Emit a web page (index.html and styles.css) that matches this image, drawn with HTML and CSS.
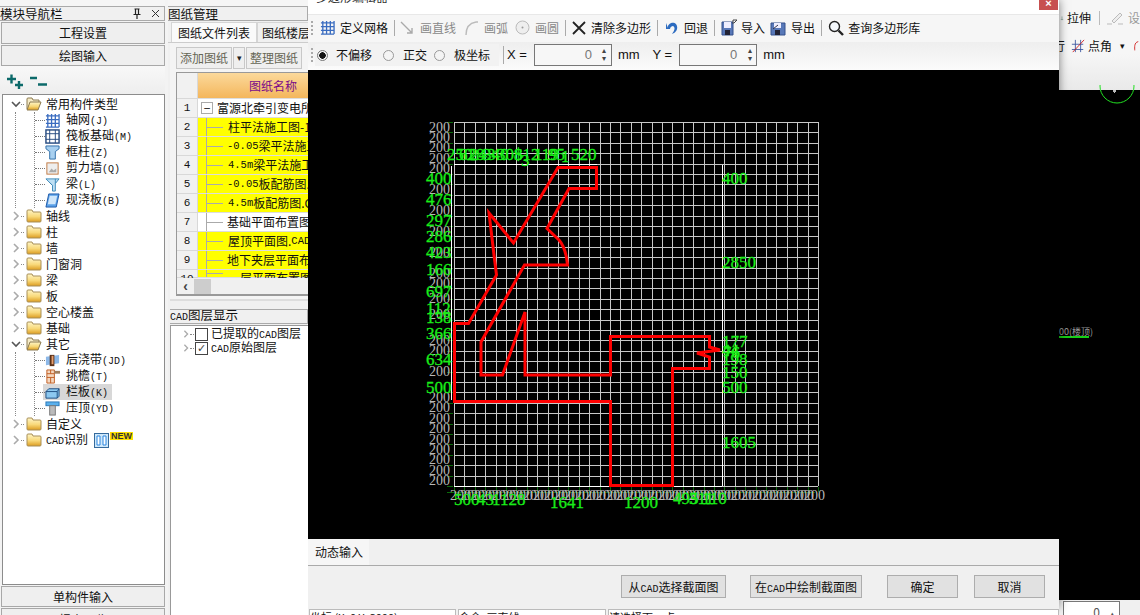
FILE: index.html
```html
<!DOCTYPE html>
<html lang="zh">
<head>
<meta charset="utf-8">
<title>多边形编辑器</title>
<link rel="stylesheet" href="styles.css">
</head>
<body>
<svg class="defs" width="0" height="0" aria-hidden="true">
  <defs>
    <linearGradient id="fg" x1="0" y1="0" x2="0" y2="1"><stop offset="0" stop-color="#fff6c8"/><stop offset=".55" stop-color="#f8d878"/><stop offset="1" stop-color="#dc9c20"/></linearGradient>
    <symbol id="folder" viewBox="0 0 16 14"><path d="M1 3V2q0-1 1-1h4l1 2h7q1 0 1 1v8q0 1-1 1H2q-1 0-1-1z" fill="url(#fg)" stroke="#a88f58"/></symbol>
    <symbol id="folder-open" viewBox="0 0 16 14"><path d="M1 12V2q0-1 1-1h4l1 2h6v2" fill="#f6ecc8" stroke="#8c7a50"/><path d="M1 13l3-8h11l-3 8z" fill="url(#fg)" stroke="#8c7a50"/></symbol>
    <symbol id="i-grid" viewBox="0 0 16 16"><path d="M1 3h14M1 7h14M1 11h14M1 15h14M3 1v14M7 1v14M11 1v14M15 1v14" stroke="#3a6cc0" stroke-width="1.4" fill="none"/></symbol>
  </defs>
</svg>
<div class="app">
  <aside class="nav">
    <div class="topgap"></div>
    <div class="head"><span class="head-t">模块导航栏</span><span class="head-i">
      <svg width="10" height="11" viewBox="0 0 10 11"><path d="M2.5 1h5M3.5 1v5M6.5 1v5M1.5 6.5h7M5 7v4" stroke="#222" stroke-width="1.2" fill="none"/></svg>
      <svg width="9" height="9" viewBox="0 0 9 9"><path d="M1 1l7 7M8 1L1 8" stroke="#333" fill="none"/></svg></span></div>
    <div class="navbtn tall">工程设置</div>
    <div class="navbtn">绘图输入</div>
    <div class="navtools">
      <svg width="44" height="20" viewBox="0 0 44 20"><path d="M1 8h9M5.500 3.500v9M9 14h8M13 10v8M24 7h7M32 13.500h9" stroke="#0c6a6a" stroke-width="2.400" fill="none"/></svg>
    </div>
    <div class="tree">
      <div class="row"><svg class="tw" viewBox="0 0 10 10"><path d="M1 3l4 4 4-4" stroke="#555" stroke-width="1.600" fill="none"/></svg><i class="dots"></i><svg class="fd"><use href="#folder-open"/></svg><span>常用构件类型</span></div>
      <div class="kids"><div class="kids-in">
        <div class="row kid"><svg class="ki" viewBox="0 0 16 16"><use href="#i-grid"/></svg><span>轴网<b>(J)</b></span></div>
        <div class="row kid"><svg class="ki" viewBox="0 0 16 16"><rect x="1" y="1" width="14" height="14" fill="none" stroke="#254a80" stroke-width="1.500"/><path d="M1 5h14M1 11h14M5 1v14M11 1v14" stroke="#254a80"/></svg><span>筏板基础<b>(M)</b></span></div>
        <div class="row kid"><svg class="ki" viewBox="0 0 16 16"><path d="M1 1h14v3l-4 3v8H5V7L1 4z" fill="#a8d0f0" stroke="#2c6ca8"/></svg><span>框柱<b>(Z)</b></span></div>
        <div class="row kid"><svg class="ki" viewBox="0 0 16 16"><rect x="2" y="2" width="12" height="12" fill="#eee" stroke="#c07840"/><path d="M4 12l3-4 2 2 3-2v4z" fill="#aaa"/></svg><span>剪力墙<b>(Q)</b></span></div>
        <div class="row kid"><svg class="ki" viewBox="0 0 16 16"><path d="M1 2h14l-4 5v8H8V9z" fill="#bfe0f4" stroke="#3a88b8"/><path d="M5 6l3 3M11 2v5" stroke="#3a88b8"/></svg><span>梁<b>(L)</b></span></div>
        <div class="row kid"><svg class="ki" viewBox="0 0 16 16"><path d="M4 1h11l-3 14H1z" fill="#5aa0e8" stroke="#1c58a8"/><path d="M5 3h8l-2 9H3z" fill="#cfe6fa"/></svg><span>现浇板<b>(B)</b></span></div>
      </div></div>
      <div class="row"><svg class="tw" viewBox="0 0 10 10"><path d="M3 1l4 4-4 4" stroke="#aaa" stroke-width="1.600" fill="none"/></svg><i class="dots"></i><svg class="fd"><use href="#folder"/></svg><span>轴线</span></div>
      <div class="row"><svg class="tw" viewBox="0 0 10 10"><path d="M3 1l4 4-4 4" stroke="#aaa" stroke-width="1.600" fill="none"/></svg><i class="dots"></i><svg class="fd"><use href="#folder"/></svg><span>柱</span></div>
      <div class="row"><svg class="tw" viewBox="0 0 10 10"><path d="M3 1l4 4-4 4" stroke="#aaa" stroke-width="1.600" fill="none"/></svg><i class="dots"></i><svg class="fd"><use href="#folder"/></svg><span>墙</span></div>
      <div class="row"><svg class="tw" viewBox="0 0 10 10"><path d="M3 1l4 4-4 4" stroke="#aaa" stroke-width="1.600" fill="none"/></svg><i class="dots"></i><svg class="fd"><use href="#folder"/></svg><span>门窗洞</span></div>
      <div class="row"><svg class="tw" viewBox="0 0 10 10"><path d="M3 1l4 4-4 4" stroke="#aaa" stroke-width="1.600" fill="none"/></svg><i class="dots"></i><svg class="fd"><use href="#folder"/></svg><span>梁</span></div>
      <div class="row"><svg class="tw" viewBox="0 0 10 10"><path d="M3 1l4 4-4 4" stroke="#aaa" stroke-width="1.600" fill="none"/></svg><i class="dots"></i><svg class="fd"><use href="#folder"/></svg><span>板</span></div>
      <div class="row"><svg class="tw" viewBox="0 0 10 10"><path d="M3 1l4 4-4 4" stroke="#aaa" stroke-width="1.600" fill="none"/></svg><i class="dots"></i><svg class="fd"><use href="#folder"/></svg><span>空心楼盖</span></div>
      <div class="row"><svg class="tw" viewBox="0 0 10 10"><path d="M3 1l4 4-4 4" stroke="#aaa" stroke-width="1.600" fill="none"/></svg><i class="dots"></i><svg class="fd"><use href="#folder"/></svg><span>基础</span></div>
      <div class="row"><svg class="tw" viewBox="0 0 10 10"><path d="M1 3l4 4 4-4" stroke="#555" stroke-width="1.600" fill="none"/></svg><i class="dots"></i><svg class="fd"><use href="#folder-open"/></svg><span>其它</span></div>
      <div class="kids short"><div class="kids-in">
        <div class="row kid"><svg class="ki" viewBox="0 0 16 16"><path d="M1 4l14-2v9L1 13z" fill="#8cb8e8"/><rect x="5" y="2" width="5" height="12" fill="#5a3018"/><rect x="7" y="3" width="2" height="9" fill="#e8a070"/></svg><span>后浇带<b>(JD)</b></span></div>
        <div class="row kid"><svg class="ki" viewBox="0 0 16 16"><path d="M2 1h8v14H2zM2 5h8M2 9h8M6 1v4M6 9v6" fill="#f4d8c0" stroke="#c05c20"/><path d="M10 2h6v3h-6z" fill="#a08060"/></svg><span>挑檐<b>(T)</b></span></div>
        <div class="row kid sel"><svg class="ki" viewBox="0 0 16 16"><path d="M1 7l3-3h11v8l-2 2H1z" fill="#8cc8f0" stroke="#1c4c80"/><path d="M1 7h12v7M13 7l2-3" fill="none" stroke="#1c4c80"/></svg><span>栏板<b>(K)</b></span></div>
        <div class="row kid"><svg class="ki" viewBox="0 0 16 16"><rect x="1" y="1" width="14" height="4" fill="#5ab0ec" stroke="#2a78b8"/><rect x="5" y="5" width="6" height="10" fill="#bbb" stroke="#777"/></svg><span>压顶<b>(YD)</b></span></div>
      </div></div>
      <div class="row"><svg class="tw" viewBox="0 0 10 10"><path d="M3 1l4 4-4 4" stroke="#aaa" stroke-width="1.600" fill="none"/></svg><i class="dots"></i><svg class="fd"><use href="#folder"/></svg><span>自定义</span></div>
      <div class="row"><svg class="tw" viewBox="0 0 10 10"><path d="M3 1l4 4-4 4" stroke="#aaa" stroke-width="1.600" fill="none"/></svg><i class="dots"></i><svg class="fd"><use href="#folder"/></svg><span><b>CAD</b>识别</span>
        <svg class="cadi" viewBox="0 0 15 15"><rect x=".5" y=".5" width="14" height="14" fill="#cfe8fa" stroke="#356a9c"/><path d="M3 3h3v9H3zM9 3h3v9H9z" fill="#fff" stroke="#2a86e0"/></svg><em class="new">NEW</em></div>
    </div>
    <div class="navbtn low">单构件输入</div>
    <div class="navbtn low cut">报表预览</div>
  </aside>

  <section class="docs">
    <div class="topgap"></div>
    <div class="head"><span class="head-t">图纸管理</span></div>
    <div class="tabs"><span class="tab on">图纸文件列表</span><span class="tab">图纸楼层构件</span></div>
    <div class="page">
      <div class="dtools"><span class="dbtn w1">添加图纸</span><span class="dbtn caret">▾</span><span class="dbtn w1">整理图纸</span></div>
      <div class="sheet">
        <div class="g-row hd"><span class="num"></span><span class="name">图纸名称</span></div>
        <div class="g-row first"><span class="num">1</span><span class="name"><i class="minus">−</i>富源北牵引变电所</span></div>
        <div class="g-row y"><span class="num">2</span><span class="name"><i class="ln"></i>柱平法施工图-1.CAD</span></div>
        <div class="g-row y"><span class="num">3</span><span class="name"><i class="ln s"></i><b>-0.05</b>梁平法施工图</span></div>
        <div class="g-row y"><span class="num">4</span><span class="name"><i class="ln"></i><b>4.5m</b>梁平法施工图</span></div>
        <div class="g-row y"><span class="num">5</span><span class="name"><i class="ln s"></i><b>-0.05</b>板配筋图.CAD</span></div>
        <div class="g-row y"><span class="num">6</span><span class="name"><i class="ln"></i><b>4.5m</b>板配筋图.CAD</span></div>
        <div class="g-row"><span class="num">7</span><span class="name"><i class="ln s"></i>基础平面布置图</span></div>
        <div class="g-row y"><span class="num">8</span><span class="name"><i class="ln"></i>屋顶平面图.<b>CAD</b></span></div>
        <div class="g-row y"><span class="num">9</span><span class="name"><i class="ln s"></i>地下夹层平面布</span></div>
        <div class="g-row y last"><span class="num">10</span><span class="name"><i class="ln l"></i>层平面布置图</span></div>
        <div class="hscroll"><span class="arr">‹</span><span class="thumb"></span></div>
      </div>
    </div>
    <div class="head layer"><span class="head-t"><b>CAD</b>图层显示</span></div>
    <div class="layers">
      <div class="lrow"><svg class="tw2" viewBox="0 0 10 10"><path d="M3 1l4 4-4 4" stroke="#aaa" stroke-width="1.600" fill="none"/></svg><i class="dots2"></i><i class="cb"></i><span>已提取的<b>CAD</b>图层</span></div>
      <div class="lrow"><svg class="tw2" viewBox="0 0 10 10"><path d="M3 1l4 4-4 4" stroke="#aaa" stroke-width="1.600" fill="none"/></svg><i class="dots2"></i><i class="cb">✓</i><span><b>CAD</b>原始图层</span></div>
    </div>
  </section>

  <main class="stage">
    <div class="ribbon">
      <div class="rb r1"><svg width="10" height="14" viewBox="0 0 10 14"><path d="M5 3v8M2 11h6" stroke="#365" fill="none"/></svg><span>拉伸</span><i class="rsep"></i><svg class="pen" width="18" height="15" viewBox="0 0 18 15"><path d="M5 10l8-8 2 2-8 8z" fill="#eee" stroke="#bbb"/><path d="M0 13h5M11 13h5" stroke="#bbb"/></svg><span class="dim">设</span></div>
      <div class="rb r2"><span>行</span><svg width="16" height="16" viewBox="0 0 16 16"><path d="M1 6h13M1 12h13M5 1v14M11 1v14" stroke="#3a55a0" fill="none"/><path d="M2 15L15 1" stroke="#d01818"/></svg><span>点角</span><span class="cr">▾</span><svg width="8" height="12" viewBox="0 0 8 12"><path d="M6 1C1 2 2 8 2 11" stroke="#d01818" fill="none"/></svg></div>
    </div>
    <div class="viewport">
      <svg class="ring" width="36" height="20" viewBox="0 0 36 20"><circle cx="18" cy="1" r="17" fill="none" stroke="#22e022"/><path d="M14 5h3v2h-1v1h-1V7h-1z" fill="#bbb"/></svg>
      <span class="floor">00(楼顶)</span>
    </div>
    <div class="statusbar"><span class="spin">0<i>▴</i></span></div>

    <div class="dialog">
      <div class="dtitle"><span>多边形编辑器</span></div>
      <span class="close">×</span>
      <div class="tb one">
        <i class="grip"></i>
        <svg class="ic g1" width="15" height="15" viewBox="0 0 16 16"><use href="#i-grid"/></svg><span class="t t1">定义网格</span><i class="sep s1"></i>
        <svg class="ic g2" width="16" height="16" viewBox="0 0 16 16"><path d="M2 2l11 11M13 8v5H8" stroke="#aaa" stroke-width="1.400" fill="none"/></svg><span class="t off t2">画直线</span>
        <svg class="ic g3" width="15" height="16" viewBox="0 0 15 16"><path d="M2 15C2 7 6 3 12 2" stroke="#bbb" stroke-width="1.400" fill="none"/><circle cx="13" cy="2" r="1" fill="#bbb"/></svg><span class="t off t3">画弧</span>
        <svg class="ic g3" width="15" height="15" viewBox="0 0 15 15"><circle cx="7.500" cy="7.500" r="6.500" fill="#eee" stroke="#bbb"/><circle cx="7.500" cy="7.500" r="1" fill="#999"/></svg><span class="t off t4">画圆</span><i class="sep s2"></i>
        <svg class="ic gx" width="14" height="14" viewBox="0 0 14 14"><path d="M1 1l12 12M13 1L1 13" stroke="#222" stroke-width="1.800" fill="none"/></svg><span class="t t5">清除多边形</span><i class="sep s3"></i>
        <svg class="ic g4" width="13" height="14" viewBox="0 0 13 14"><path d="M3 7C2 3 8 0 11 3c3 4 0 9-4 10C9 10 11 7 8 5 7 5 5 6 5 8L1 8 1 2z" fill="#2d6cc0"/></svg><span class="t t6">回退</span><i class="sep s4"></i>
        <svg class="ic g5" width="17" height="17" viewBox="0 0 17 17"><path d="M1 3h11v13H1z" fill="#5878b8" stroke="#34508c"/><rect x="3" y="3" width="7" height="6" fill="#eef"/><rect x="4" y="11" width="5" height="5" fill="#223"/><path d="M12 5V1h4M13 4l3-3" stroke="#444" fill="none"/></svg><span class="t t7">导入</span>
        <svg class="ic g6" width="17" height="16" viewBox="0 0 17 16"><path d="M1 3h14v12H1z" fill="#5878b8" stroke="#34508c"/><rect x="4" y="3" width="7" height="5" fill="#eef"/><rect x="5" y="10" width="5" height="5" fill="#223"/><path d="M8 5l-5 4" stroke="#334" fill="none"/></svg><span class="t t8">导出</span><i class="sep s5"></i>
        <svg class="ic g5" width="16" height="16" viewBox="0 0 16 16"><circle cx="6.500" cy="6.500" r="5" fill="#f4f8fc" stroke="#222" stroke-width="1.400"/><path d="M10.500 10.500l4.500 4.500" stroke="#222" stroke-width="2.400"/></svg><span class="t t9">查询多边形库</span>
      </div>
      <div class="tb two">
        <i class="grip"></i>
        <div class="radios">
          <i class="radio on"></i><span class="rl r-a">不偏移</span>
          <i class="radio"></i><span class="rl r-b">正交</span>
          <i class="radio"></i><span class="rl">极坐标</span>
        </div>
        <i class="sep s6"></i>
        <span class="lab">X =</span>
        <span class="num-in">0<i class="sp">▴<br>▾</i></span>
        <span class="lab mm">mm</span>
        <span class="lab y">Y =</span>
        <span class="num-in">0<i class="sp">▴<br>▾</i></span>
        <span class="lab mm">mm</span>
      </div>
      <svg class="cad" width="751" height="469" viewBox="308 70 751 469" role="img" aria-label="多边形网格">
        <path class="grid" d="M454 122V486M464 122V486M475 122V486M485 122V486M496 122V486M506 122V486M516 122V486M527 122V486M537 122V486M548 122V486M558 122V486M568 122V486M579 122V486M589 122V486M600 122V486M610 122V486M620 122V486M631 122V486M641 122V486M652 122V486M662 122V486M672 122V486M683 122V486M693 122V486M704 122V486M714 122V486M724 122V486M735 122V486M745 122V486M756 122V486M766 122V486M776 122V486M787 122V486M797 122V486M808 122V486M818 122V486M454 122H818M454 132H818M454 143H818M454 153H818M454 164H818M454 174H818M454 184H818M454 195H818M454 205H818M454 216H818M454 226H818M454 236H818M454 247H818M454 257H818M454 268H818M454 278H818M454 288H818M454 299H818M454 309H818M454 320H818M454 330H818M454 340H818M454 351H818M454 361H818M454 372H818M454 382H818M454 392H818M454 403H818M454 413H818M454 424H818M454 434H818M454 444H818M454 455H818M454 465H818M454 476H818M454 486H818"/>
        <path class="ticks" d="M447 492H815M454 487V492M464 487V492M475 487V492M485 487V492M496 487V492M506 487V492M516 487V492M527 487V492M537 487V492M548 487V492M558 487V492M568 487V492M579 487V492M589 487V492M600 487V492M610 487V492M620 487V492M631 487V492M641 487V492M652 487V492M662 487V492M672 487V492M683 487V492M693 487V492M704 487V492M714 487V492M724 487V492M735 487V492M745 487V492M756 487V492M766 487V492M776 487V492M787 487V492M797 487V492M808 487V492M818 487V492M447 122H453M447 132H453M447 143H453M447 153H453M447 164H453M447 174H453M447 184H453M447 195H453M447 205H453M447 216H453M447 226H453M447 236H453M447 247H453M447 257H453M447 268H453M447 278H453M447 288H453M447 299H453M447 309H453M447 320H453M447 330H453M447 340H453M447 351H453M447 361H453M447 372H453M447 382H453M447 392H453M447 403H453M447 413H453M447 424H453M447 434H453M447 444H453M447 455H453M447 465H453M447 476H453M447 486H453"/>
        <path class="wh" d="M454 164.500H597M451.500 166V400M722.500 165V486M454 486.500H722"/>
        <g class="gy">
          <text x="429" y="132">200</text><text x="429" y="142">200</text><text x="429" y="152">200</text><text x="429" y="163">200</text><text x="429" y="173">200</text><text x="429" y="194">200</text><text x="429" y="215">200</text><text x="429" y="236">200</text><text x="429" y="257">200</text><text x="429" y="278">200</text><text x="429" y="288">200</text><text x="429" y="303">200</text><text x="429" y="319">200</text><text x="429" y="345">200</text><text x="429" y="355">200</text><text x="429" y="376">200</text><text x="429" y="402">200</text><text x="429" y="412">200</text><text x="429" y="423">200</text><text x="429" y="433">200</text><text x="429" y="444">200</text><text x="429" y="454">200</text><text x="429" y="464">200</text><text x="429" y="475">200</text><text x="429" y="485">200</text>
          <text x="450" y="500">200</text><text x="460" y="500">200</text><text x="471" y="500">200</text><text x="481" y="500">200</text><text x="492" y="500">200</text><text x="502" y="500">200</text><text x="512" y="500">200</text><text x="523" y="500">200</text><text x="533" y="500">200</text><text x="544" y="500">200</text><text x="554" y="500">200</text><text x="564" y="500">200</text><text x="575" y="500">200</text><text x="585" y="500">200</text><text x="596" y="500">200</text><text x="606" y="500">200</text><text x="616" y="500">200</text><text x="627" y="500">200</text><text x="637" y="500">200</text><text x="648" y="500">200</text><text x="658" y="500">200</text><text x="668" y="500">200</text><text x="679" y="500">200</text><text x="689" y="500">200</text><text x="700" y="500">200</text><text x="710" y="500">200</text><text x="720" y="500">200</text><text x="731" y="500">200</text><text x="741" y="500">200</text><text x="752" y="500">200</text><text x="762" y="500">200</text><text x="772" y="500">200</text><text x="783" y="500">200</text><text x="793" y="500">200</text><text x="804" y="500">200</text>
        </g>
        <path class="poly" d="M558 167.500H596.500V188.500H569L547 228.500 559 240Q566 248 567.500 265H524.500L481 342V375H502.500L525 312V375H610.500V336.500H709.500V347L720 350 697 353 709.500 357V368.500H672.500V485.500H610.500V401.500H454.500V323.500H468.500L496.500 275 494 255 489 213 513.500 243z"/>
        <g class="gr">
          <text x="447" y="160">250</text><text x="459" y="160">628</text><text x="470" y="160">243</text><text x="483" y="160">340</text><text x="497" y="160">308</text><text x="514" y="160">$12</text><text x="534" y="160">119</text><text x="548" y="160">95</text><text x="571" y="160">520</text><text x="521" y="166">3</text><text x="561" y="162">1</text>
          <text x="426" y="184">400</text><text x="426" y="205">476</text><text x="426" y="226">297</text><text x="426" y="242">286</text><text x="426" y="258">423</text><text x="426" y="275">166</text><text x="426" y="297">697</text><text x="426" y="314">112</text><text x="426" y="323">138</text><text x="426" y="339">366</text><text x="426" y="365">634</text><text x="426" y="393">500</text>
          <text x="722" y="184">400</text><text x="722" y="268">2850</text><text x="722" y="347">177</text><text x="722" y="356">44</text><text x="723" y="358">76</text><text x="722" y="365">198</text><text x="722" y="378">150</text><text x="722" y="393">500</text><text x="722" y="448">1605</text>
          <text x="454" y="505">500</text><text x="477" y="505">43</text><text x="492" y="505">1</text><text x="500" y="505">128</text><text x="550" y="508">1641</text><text x="624" y="508">1200</text><text x="673" y="504">495</text><text x="689" y="504">311</text><text x="702" y="504">110</text>
        </g>
      </svg>
      <div class="dtab"><span>动态输入</span></div>
      <div class="foot">
        <span class="fbtn a">从<b>CAD</b>选择截面图</span>
        <span class="fbtn b">在<b>CAD</b>中绘制截面图</span>
        <span class="fbtn c">确定</span>
        <span class="fbtn c">取消</span>
      </div>
    </div>
    <div class="under"><span class="ub u1">坐标 (X: 0 Y: 3000)</span><span class="ub u2">命令: 画直线</span><span class="ub u3">请选择下一点</span></div>
  </main>
</div>
</body>
</html>
```
FILE: styles.css
```css
* { box-sizing: border-box; }
html, body { margin: 0; height: 100%; }
body { width: 1140px; height: 615px; overflow: hidden; background: #f0f0f0; font: 12px/16px "Noto Sans CJK SC", "Liberation Sans", sans-serif; color: #111; }
.defs { position: absolute; }
i, em { font-style: normal; }
b { font: 10px/16px "Liberation Mono", monospace; }
.app { display: flex; width: 1140px; height: 615px; }
.topgap { height: 6px; background: #f5f5f5; flex: none; }

/* nav */
.nav { width: 168px; flex: none; background: #f3f3f3; padding-right: 3px; display: flex; flex-direction: column; }
.head { height: 15px; flex: none; display: flex; align-items: center; justify-content: space-between; border-top: 1px solid #aaa; border-bottom: 1px solid #aaa; border-right: 1px solid #aaa; background: #f0f0f0; font-size: 12.500px; line-height: 13px; white-space: nowrap; }
.head-i { display: flex; gap: 9px; align-items: center; padding-right: 4px; }
.navbtn { height: 21px; margin: 1px 0 0 1px; background: #efefef; border: 1px solid #a8a8a8; text-align: center; line-height: 19px; flex: none; }
.navbtn.tall { height: 22px; line-height: 20px; }
.navtools { height: 28px; flex: none; padding: 5px 0 0 6px; background: linear-gradient(#f8f8f8, #eee); }
.tree { flex: 1; margin-left: 2px; background: #fff; border: 1.500px solid #8c8c8c; padding-top: 1px; overflow: hidden; min-height: 0; }
.navbtn.low { margin-top: 1px; height: 21px; }
.navbtn.cut { height: 20px; line-height: 22px; margin-bottom: -13px; overflow: hidden; }
.row { height: 16px; display: flex; align-items: center; white-space: nowrap; padding-left: 8px; }
.tw { width: 10px; height: 10px; flex: none; }
.dots { width: 3px; margin: 0 2px 0 0; border-top: 1px dotted #888; flex: none; }
.fd { width: 16px; height: 14px; margin-right: 4px; flex: none; }
.kids { margin-left: 12px; border-left: 1px dotted #888; }
.kids-in { margin-left: 18px; border-left: 1px dotted #888; height: 96px; }
.kids.short .kids-in { height: 64px; }
.kid { padding-left: 0; }
.kid::before { content: ""; width: 10px; border-top: 1px dotted #777; flex: none; }
.ki { width: 15px; height: 15px; margin-right: 6px; flex: none; }
.sel { background: linear-gradient(#d8d8d8, #d8d8d8) 8px 0 / 69px 100% no-repeat; }
.cadi { width: 15px; height: 15px; margin-left: 6px; flex: none; }
.new { font: bold 9px/8px "Liberation Sans", sans-serif; background: #ffe000; color: #333; padding: 0 1px; align-self: flex-start; margin-left: 1px; }

/* docs */
.docs { width: 140px; flex: none; overflow: hidden; background: #f0f0f0; display: flex; flex-direction: column; }
.tabs { display: flex; height: 21px; margin-top: 1px; padding-left: 3px; border-bottom: 1px solid #ccc; flex: none; white-space: nowrap; }
.tab { flex: none; padding: 0 3px 0 4px; line-height: 19px; background: #f0f0f0; border: 1px solid #d5d5d5; border-bottom: 0; }
.tab.on { background: #fafafa; width: 86px; padding-left: 6px; }
.page { height: 258px; flex: none; margin-left: 2px; background: #f4f4f4; border-bottom: 2px solid #ddd; padding: 4px 0 0 6px; overflow: hidden; }
.dtools { display: flex; gap: 1px; height: 22px; }
.dbtn { flex: none; background: #efefef; border: 1px solid #c8c8c8; color: #665; line-height: 20px; text-align: center; }
.dbtn.w1 { width: 56px; }
.dbtn.caret { width: 12px; font-size: 9px; color: #222; }
.sheet { margin-top: 3px; border: 1.500px solid #999; border-right: 0; background: #fff; width: 200px; }
.g-row { display: flex; height: 19px; white-space: nowrap; }
.g-row .num { width: 21px; background: #f1f1f1; border: 1px solid #d8d8d8; border-width: 0 1px 1px 0; text-align: center; flex: none; font: 11px/18px "Liberation Mono", monospace; }
.name { flex: 1; display: flex; align-items: center; border-bottom: 1px solid #ddd; padding-left: 3px; }
.g-row.y .name { background: #ffff00; }
.g-row .name b { font-size: 10.500px; }
.g-row.hd { height: 26px; }
.hd .num { height: 26px; }
.hd .name { background: linear-gradient(#fbd99b, #f4b65c); color: #7a0a8a; justify-content: flex-start; padding-left: 51px; }
.minus { width: 12px; height: 12px; border: 1px solid #aaa; line-height: 9px; font-size: 12px; text-align: center; margin-right: 4px; background: #fff; }
.ln { width: 21px; height: 100%; margin-left: 5px; border-left: 1px solid #aaa; flex: none; margin-right: 1px; background: linear-gradient(#aaa, #aaa) 0 50%/16px 1px no-repeat; }
.ln.s { width: 20px; }
.ln.l { width: 33px; }
.g-row.last { height: 8px; overflow: hidden; }
.g-row.last .name { align-items: flex-start; }
.hscroll { height: 17px; background: #f0f0f0; display: flex; align-items: center; border-bottom: 1.500px solid #999; }
.arr { width: 17px; text-align: center; font: bold 14px/14px "Liberation Sans", sans-serif; color: #444; }
.thumb { width: 17px; height: 15px; background: #cdcdcd; }
.head.layer { margin-top: 8px; margin-left: 2px; }
.layers { flex: 1; margin: 1px 0 0 2px; background: #fff; border-left: 1.500px solid #999; border-top: 1.500px solid #999; padding: 1px 0 0 11px; }
.lrow { display: flex; align-items: center; height: 14px; white-space: nowrap; }
.tw2 { width: 8px; height: 10px; flex: none; }
.dots2 { width: 4px; border-top: 1px dotted #888; margin-right: 1px; flex: none; }
.cb { width: 13px; height: 13px; border: 1px solid #444; margin-right: 3px; font: 11px/11px "DejaVu Sans", sans-serif; text-align: center; flex: none; color: #444; }

/* stage */
.stage { position: relative; flex: 1; background: #000; display: flex; flex-direction: column; overflow: hidden; }
.ribbon { height: 90px; flex: none; margin-left: 751px; background: linear-gradient(#f6f6f6 60%, #e9e9e9); padding-top: 5px; }
.rb { display: flex; align-items: center; white-space: nowrap; height: 26px; overflow: hidden; }
.r1 { gap: 2px; }
.r1 svg:first-child { margin-left: 1px; }
.r1 span { margin-left: 1px; }
.r1 .rsep { margin: 0 5px 0 6px; }
.r2 { margin-top: 2px; gap: 3px; }
.r2 span:first-child { margin-left: -6px; }
.r2 svg:first-of-type { margin-left: 3px; }
.rsep { width: 1px; height: 14px; background: #bbb; flex: none; }
.pen { flex: none; }
.dim { color: #999; }
.cr { font-size: 9px; margin: 0 5px; }
.viewport { flex: 1; position: relative; }
.ring { position: absolute; left: 791px; top: -5px; }
.floor { position: absolute; left: 751px; top: 238px; font: 9px/8px "Noto Sans CJK SC", sans-serif; color: #999; border-bottom: 2px solid #16d016; width: 30px; white-space: nowrap; }
.statusbar { height: 15px; flex: none; background: #f0f0f0; padding-left: 755px; }
.spin { display: block; width: 57px; height: 15px; margin-top: 1px; background: #fff; border: 1px solid #777; border-bottom: 0; text-align: right; color: #555; padding-right: 4px; line-height: 20px; }
.spin i { font-size: 9px; margin-left: 10px; }

/* dialog */
.dialog { position: absolute; left: 0; top: 0; width: 751px; height: 607px; background: #f0f0f0; box-shadow: 0 0 9px rgba(0, 0, 0, .5); display: flex; flex-direction: column; }
.dtitle { height: 14px; flex: none; background: #fff; padding-left: 8px; overflow: hidden; color: #333; }
.dtitle span { display: block; margin-top: -11px; }
.close { position: absolute; left: 731px; top: 0; width: 19px; height: 10px; background: #c75050; color: #fff; font: bold 11px/7px "Liberation Sans", sans-serif; text-align: center; }
.tb { display: flex; align-items: center; flex: none; white-space: nowrap; padding-bottom: 2px; }
.tb.one { height: 28px; background: #f6f6f6; border-top: 1px solid #e8e8e8; }
.tb.two { height: 28px; background: linear-gradient(#eee, #fbfbfb); }
.grip { width: 2px; height: 14px; margin-left: 3px; flex: none; border-left: 2px dotted #aaa; }
.ic { flex: none; }
.sep { width: 1px; height: 16px; background: #aaa; flex: none; }
.g1 { margin-left: 7px; }
.t { margin-left: 5px; }
.off { color: #888; }
.s1 { margin: 0 4px 0 6px; }
.g3 { margin-left: 8px; }
.t3 { margin-right: -1px; }
.s2 { margin-left: 6px; }
.gx { margin-left: 6px; }
.s3 { margin: 0 6px; }
.s4 { margin-left: 6px; }
.g4 { margin-left: 1px; }
.t6 { margin-left: 6px; }
.g5 { margin-left: 6px; }
.t7 { margin-left: 3px; }
.g6 { margin-left: 5px; }
.t8 { margin-left: 4px; }
.s5 { margin-left: 6px; }
.t9 { margin-left: 4px; }
.radios { display: flex; align-items: center; height: 22px; width: 184px; margin-left: 2px; padding-left: 2px; background: #f2f2f2; flex: none; }
.radio { width: 11px; height: 11px; border-radius: 50%; border: 1px solid #999; background: #f4f4f4; flex: none; }
.radio.on { background: radial-gradient(circle, #111 0 3px, #f4f4f4 3.500px); border-color: #777; }
.rl { margin: 0 15px 0 9px; }
.rl.r-a { margin: 0 11px 0 8px; }
.rl.r-b { margin-right: 7px; }
.s6 { height: 18px; margin-left: 4px; }
.lab { font: 13px/16px "Liberation Sans", sans-serif; margin-left: 3px; }
.num-in { width: 78px; height: 22px; margin-left: 7px; border: 1.500px solid #777; background: #f7f7f7; display: flex; align-items: center; justify-content: flex-end; color: #777; font: 13px/16px "Liberation Sans", sans-serif; padding-right: 2px; }
.sp { font-size: 8px; line-height: 8px; margin-left: 8px; color: #444; text-align: center; width: 9px; }
.lab.mm { margin-left: 6px; }
.lab.y { margin-left: 13px; }
.cad { display: block; flex: none; background: #000; }
.grid { stroke: #c8c8c8; fill: none; shape-rendering: crispEdges; }
.ticks { stroke: #0a6a0a; fill: none; shape-rendering: crispEdges; }
.wh { stroke: #fff; fill: none; shape-rendering: crispEdges; }
.poly { fill: none; stroke: #ff0000; stroke-width: 3; stroke-linejoin: miter; }
.gy text { font: 14px "Liberation Serif", serif; fill: #b8b8b8; }
.gr text { font: 17px "Liberation Serif", serif; fill: #19ee19; stroke: #19ee19; stroke-width: .3px; }
.dtab { height: 27px; flex: none; background: #f0f0f0; border-bottom: 1px solid #aaa; }
.dtab span { display: inline-block; width: 61px; height: 26px; background: #f6f6f6; line-height: 26px; padding-left: 7px; white-space: nowrap; }
.foot { flex: 1; display: flex; align-items: flex-start; padding: 9px 0 0 313px; }
.fbtn { height: 23px; background: #e1e1e1; border: 1px solid #adadad; text-align: center; line-height: 21px; white-space: nowrap; }
.fbtn.a { width: 105px; }
.fbtn.b { width: 112px; margin-left: 24px; }
.fbtn.c { width: 71px; margin-left: 25px; }
.fbtn.c:last-child { margin-left: 16px; }
.under { position: absolute; left: 0; top: 607px; width: 751px; height: 8px; background: #f0f0f0; display: flex; gap: 2px; padding-left: 1px; padding-top: 2px; overflow: hidden; }
.ub { background: #fff; border: 1px solid #bbb; border-bottom: 0; height: 12px; line-height: 15px; font-size: 11px; white-space: nowrap; overflow: hidden; }
.u1 { width: 147px; }
.u2 { width: 148px; }
.u3 { flex: 1; }
```
